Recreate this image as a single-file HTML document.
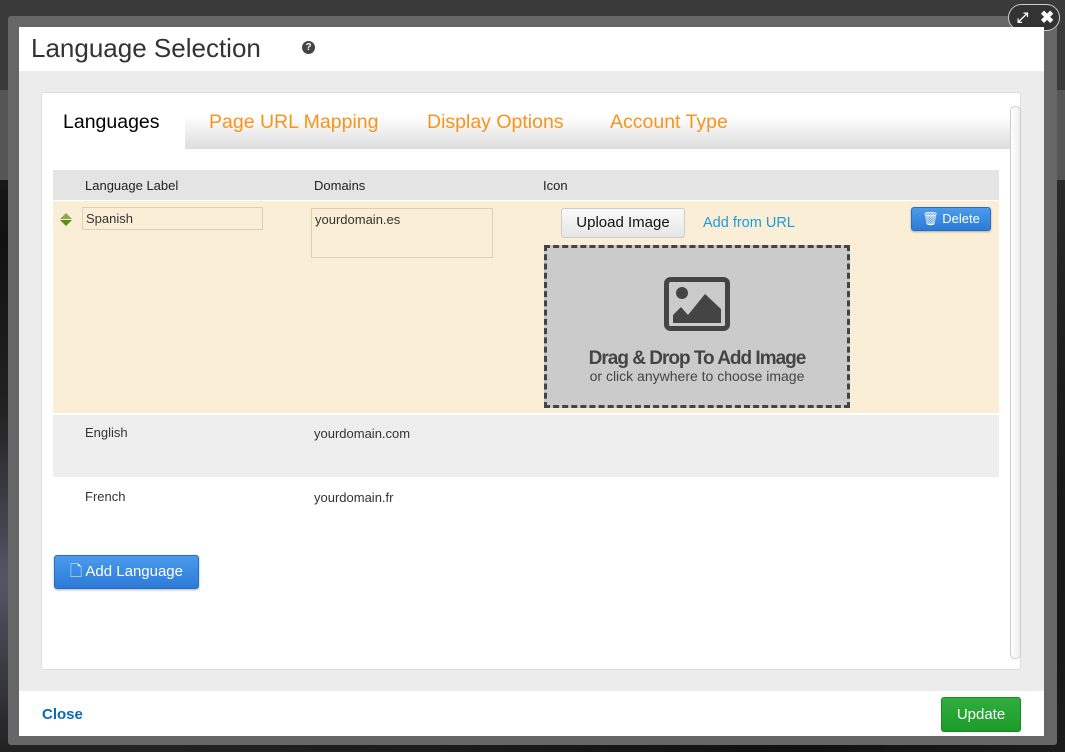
<!DOCTYPE html>
<html><head><meta charset="utf-8"><style>
*{box-sizing:border-box;margin:0;padding:0}
body{width:1065px;height:752px;overflow:hidden;background:#3a3a3a;font-family:"Liberation Sans",sans-serif;position:relative}
.bgdark{position:absolute;left:0;top:180px;width:1065px;height:572px;background:radial-gradient(ellipse at 0% 70%,#556 0%,#222 30%,#111 60%,#2a2a2a 100%)}
.band{position:absolute;left:0;top:90px;width:1065px;height:90px;background:#555}
.frame{position:absolute;left:8px;top:16px;width:1049px;height:729px;background:#666;border-radius:3px}
.dlg{position:absolute;left:19px;top:27px;width:1025px;height:709px;background:#ececec}
.hdr{position:absolute;left:0;top:0;width:1025px;height:44px;background:#fff}
.hdr h1{position:absolute;left:12px;top:6px;font-size:26px;font-weight:normal;color:#333}
.q{position:absolute;left:283px;top:14px;width:13px;height:13px;border-radius:50%;background:#444;color:#fff;font-size:10px;font-weight:bold;text-align:center;line-height:13px}
.ftr{position:absolute;left:0;top:664px;width:1025px;height:45px;background:#fff}
.close{position:absolute;left:23px;top:15px;color:#0a6ab8;font-weight:bold;font-size:15px}
.upd{position:absolute;left:922px;top:6px;width:80px;height:35px;background:linear-gradient(#2fae3e,#1d9b2a);border:1px solid #188a24;border-radius:3px;color:#fff;font-size:15px;text-align:center;line-height:33px}
.panel{position:absolute;left:22px;top:65px;width:980px;height:578px;background:#fff;border:1px solid #ddd;border-radius:3px}
.tabs{position:absolute;left:143px;top:8px;width:825px;height:48px;background:linear-gradient(#fff 30%,#ddd)}
.tab{position:absolute;top:18px;font-size:19.5px;color:#f7941d}
.sb{position:absolute;left:968px;top:13px;width:11px;height:553px;border:1px solid #ccc;border-radius:5px;background:linear-gradient(90deg,#fff,#eee)}
.th{position:absolute;left:11px;top:77px;width:946px;height:30px;background:#e4e4e4;font-size:13px;color:#222}
.th span,.r span{position:absolute;top:8px}
.r{position:absolute;left:11px;width:946px;font-size:13px;color:#333}
.inp{position:absolute;border:1px solid #ddd0b0;background:#faefd6;font-size:13px;padding:3px 3px}
.btn{position:absolute;border:1px solid #ccc;border-radius:3px;background:linear-gradient(#fafafa,#e6e6e6);font-size:15px;color:#111;text-align:center}
.blue{position:absolute;border:1px solid #2a6ec4;border-radius:3px;background:linear-gradient(#4a9cec,#2c7ad8);color:#fff;text-align:center;box-shadow:0 1px 2px rgba(0,0,0,.3)}
.drop{position:absolute;left:491px;top:44px;width:306px;height:163px;background:#cbcbcb;border:3px dashed #444;text-align:center;color:#444}
</style></head><body>
<div class="band"></div><div class="bgdark"></div>
<div class="frame"></div>
<div style="position:absolute;left:1008px;top:4px;width:52px;height:27px;border-radius:14px;background:#333;border:1px solid #ccc;color:#fff;font-size:17px;font-weight:bold;line-height:25px"><span style="position:absolute;left:8px;font-size:14px">⤢</span><span style="position:absolute;left:31px">✖</span></div>
<div class="dlg">
<div class="hdr"><h1>Language Selection</h1><div class="q">?</div></div>
<div class="panel">
<div class="tabs"></div>
<div class="tab" style="left:21px;color:#000">Languages</div>
<div class="tab" style="left:167px">Page URL Mapping</div>
<div class="tab" style="left:385px">Display Options</div>
<div class="tab" style="left:568px">Account Type</div>
<div class="sb"></div>
<div class="th"><span style="left:32px">Language Label</span><span style="left:261px">Domains</span><span style="left:490px">Icon</span></div>
<div class="r" style="top:108px;height:212px;background:#faefd6">
<div style="position:absolute;left:7px;top:12px;width:0;height:0;border-left:6px solid transparent;border-right:6px solid transparent;border-bottom:6px solid #8aad4a"></div>
<div style="position:absolute;left:7px;top:19px;width:0;height:0;border-left:6px solid transparent;border-right:6px solid transparent;border-top:6px solid #5c8a1e"></div>
<div class="inp" style="left:29px;top:6px;width:181px;height:23px">Spanish</div>
<div class="inp" style="left:258px;top:7px;width:182px;height:50px">yourdomain.es</div>
<div class="btn" style="left:508px;top:7px;width:124px;height:30px;line-height:28px">Upload Image</div>
<div style="position:absolute;left:650px;top:14px;color:#1a9be0;font-size:14.5px">Add from URL</div>
<div class="blue" style="left:858px;top:6px;width:80px;height:24px;font-size:13px;line-height:22px">🗑 Delete</div>
<div class="drop">
<svg width="66" height="54" viewBox="0 0 66 54" style="margin-top:29px"><rect x="2.5" y="2.5" width="61" height="49" rx="4" fill="none" stroke="#444" stroke-width="5"/><circle cx="18" cy="16" r="6" fill="#444"/><path d="M9 46 L9 38 L17 30 L24 38 L41 17 L57 32 L57 46Z" fill="#444"/></svg>
<div style="font-size:19px;font-weight:bold;letter-spacing:-1px;margin-top:14px">Drag &amp; Drop To Add Image</div>
<div style="font-size:14px;margin-top:-2px">or click anywhere to choose image</div>
</div>
</div>
<div class="r" style="top:322px;height:62px;background:#eee"><span style="left:32px;top:10px">English</span><span style="left:261px;top:11px">yourdomain.com</span></div>
<div class="r" style="top:385px;height:62px"><span style="left:32px;top:11px">French</span><span style="left:261px;top:12px">yourdomain.fr</span></div>
<div class="blue" style="left:12px;top:462px;width:145px;height:34px;font-size:15px;line-height:32px">🗋 Add Language</div>
</div>
<div class="ftr"><div class="close">Close</div><div class="upd">Update</div></div>
</div>
</body></html>
